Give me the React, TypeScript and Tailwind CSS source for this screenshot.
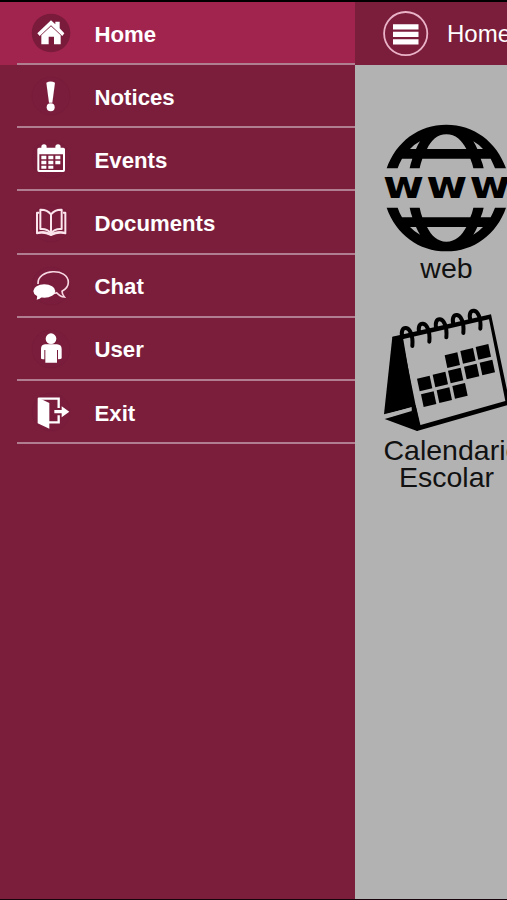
import type { ReactNode } from "react";

const sans = "font-['Liberation_Sans',Arial,sans-serif]";

function RowIcon({ children, home = false }: { children: ReactNode; home?: boolean }) {
  return (
    <svg
      viewBox="0 0 120 120"
      className={`mt-px ml-[31px] h-[40px] w-[40px] shrink-0 ${home ? "text-[#771c3a]" : "text-[#741a39]"}`}
      fill="#fff"
    >
      {children}
    </svg>
  );
}

const disc = <circle cx="60" cy="60" r="57" fill="#7a1d3c" stroke="#731b39" strokeWidth="1.5" />;

const HomeIcon = (
  <RowIcon home>
    <circle cx="60" cy="60" r="58" fill="#7a1b3c" />
    <path d="M60 22 L73 34 V26 H86 V46 L100 61 L94 69 L60 37 L26 69 L19 61 Z" />
    <path d="M60 40 L89 67 V94 H69 V71 H53 V94 H31 V67 Z" />
  </RowIcon>
);

const NoticeIcon = (
  <RowIcon>
    {disc}
    <path d="M46 20 Q59 13 72 20 L64 80 H54 Z" />
    <circle cx="59" cy="94" r="12" />
  </RowIcon>
);

const EventsIcon = (
  <RowIcon>
    {disc}
    <path
      fillRule="evenodd"
      d="M24 26 H97 Q102 26 102 31 V94 Q102 99 97 99 H24 Q19 99 19 94 V31 Q19 26 24 26 Z M25 46 V93 H96 V46 Z"
    />
    <circle cx="39" cy="24" r="8" />
    <circle cx="81" cy="24" r="8" />
    <path d="M31 50h15v11H31zM52 50h15v11H52zM73 50h15v11H73zM31 65h15v11H31zM52 65h15v11H52zM73 65h15v11H73zM31 80h15v9H31zM52 80h15v9H52z" />
  </RowIcon>
);

const DocumentsIcon = (
  <RowIcon>
    {disc}
    <g fill="none" stroke="#fbe4ec" strokeWidth="6" strokeLinejoin="round">
      <path d="M60 34 Q48 19 28 20 V78 Q49 76 60 91 Q71 76 92 78 V20 Q72 19 60 34 Z" />
      <path d="M60 34 V90" />
      <path d="M25 29 H18 V91 Q42 83 60 95 Q78 83 103 91 V29 H96" />
    </g>
    <path fill="#fbe4ec" d="M19 86 Q44 82 60 91 Q76 82 102 86 V93 Q82 88 60 99 Q38 88 19 93 Z" />
  </RowIcon>
);

const ChatIcon = (
  <RowIcon>
    {disc}
    <path
      fill="none"
      stroke="#f7d7e2"
      strokeWidth="5"
      d="M21 54 C18 8 112 4 112 49 C112 61 104 70 93 76 C93 83 96 88 100 93 C90 92 82 86 77 80 Q72 82 66 82"
    />
    <ellipse cx="40" cy="75" rx="33" ry="20" />
    <path d="M18 88 Q20 95 17 101 Q27 99 33 92 Z" />
  </RowIcon>
);

const UserIcon = (
  <RowIcon>
    {disc}
    <circle cx="60" cy="29" r="16" />
    <path d="M42 46 H78 Q92 47 92 60 V88 Q91 91 81 91 V63 H78 V101 H43 V63 H40 V91 Q30 91 30 88 V60 Q30 47 42 46 Z" />
  </RowIcon>
);

const ExitIcon = (
  <RowIcon>
    {disc}
    <path d="M22 17 L55 33 V110 L20 94 V19 Z" />
    <path d="M22 20 H83 V48 M83 70 V91 H54" fill="none" stroke="#fff" strokeWidth="7" />
    <path d="M70 54 H92 V43 L115 59 L92 76 V64 H70 Z" />
  </RowIcon>
);

const items = [
  { label: "Home", icon: HomeIcon },
  { label: "Notices", icon: NoticeIcon },
  { label: "Events", icon: EventsIcon },
  { label: "Documents", icon: DocumentsIcon },
  { label: "Chat", icon: ChatIcon },
  { label: "User", icon: UserIcon },
  { label: "Exit", icon: ExitIcon },
];

function Globe() {
  const half = (
    <path
      fillRule="evenodd"
      d="M51 160 C79 80 147 29 230 29 C313 29 381 80 409 160 H376 Q370 145 363 131 H333 Q339 145 342 160 H311 Q308 145 302 131 H158 Q153 145 150 160 H120 Q123 145 128 131 H97 Q89 145 84 160 Z M172 102 H290 C276 76 258 58 230 58 C203 58 185 76 172 102 Z M121 102 H139 Q144 90 151 79 Q134 88 121 102 Z M323 102 H340 Q327 88 311 79 Q318 90 323 102 Z"
    />
  );
  return (
    <svg viewBox="43 27 378 384" className="block h-[128px] w-[126px]" fill="#000">
      {half}
      <g transform="translate(0 438) scale(1 -1)">{half}</g>
      <text
        x="0"
        y="0"
        transform="translate(40 249) scale(1.19 1)"
        fontSize="112"
        fontWeight="700"
        letterSpacing="5.5"
        fontFamily="'DejaVu Sans', sans-serif"
      >
        www
      </text>
    </svg>
  );
}

const squares = [
  [222, 180], [269, 167], [315, 155],
  [139, 250], [186, 238], [232, 226], [280, 214], [327, 202],
  [151, 297], [198, 285], [245, 272],
];

function CalendarArt() {
  return (
    <svg viewBox="40 38 378 372" className="block h-[124px] w-[126px]" fill="#000">
      <path d="M65 125 L96 121 L132 334 L40 357 Z" />
      <path d="M42 371 L123 347 L148 393 L139 407 Z" />
      <path d="M123 334 L135 330 L150 392 L139 407 Z" />
      <path fillRule="evenodd" d="M65 124 L361 57 L418 327 L139 407 Z M95 132 L147 390 L404 317 L355 72 Z" />
      <path d="M42 358 L123 335 V344 L58 365 Z" fill="#b2b2b2" />
      {squares.map(([x, y]) => (
        <path key={`${x}-${y}`} d={`M${x} ${y} l38 -9 l8 38 l-38 9 z`} />
      ))}
      {[0, 1, 2, 3, 4].map((i) => (
        <path
          key={i}
          d="M95 126 C90 106 97 97 106 98 C117 99 128 119 125 152"
          transform={`translate(${i * 51} ${i * -13})`}
          fill="none"
          stroke="#000"
          strokeWidth="12"
          strokeLinecap="round"
        />
      ))}
    </svg>
  );
}

export default function App() {
  return (
    <div className={`flex h-[900px] w-[507px] flex-col overflow-hidden border-b border-t-2 border-b-[#16030c] border-t-black bg-[#7b1e3c] ${sans}`}>
      <div className="flex min-h-0 flex-1">
        <nav className="w-[355px] shrink-0 bg-[#7b1e3c]">
          {items.map((item, i) => (
            <div key={item.label} className={`h-[63.2px] ${i === 0 ? "bg-[#a0244e]" : ""}`}>
              <div className="flex h-[61px] items-center">
                {item.icon}
                <span className="ml-[23.5px] pt-[4px] text-[22.2px] leading-[26px] font-bold text-white">{item.label}</span>
              </div>
              <div className="ml-[17px] h-[2px] bg-[#b17d91]" />
            </div>
          ))}
        </nav>
        <main className="w-[152px] shrink-0 overflow-hidden bg-[#b2b2b2]">
          <header className="flex h-[63px] items-center bg-[#7b1e3c]">
            <svg viewBox="0 0 46 46" className="ml-[28px] h-[46px] w-[46px] shrink-0">
              <circle cx="22.7" cy="22.6" r="21.6" fill="none" stroke="#eab3c8" strokeWidth="1.8" />
              <path d="M10 13.2h25.5v5.3H10zM10 20.7h25.5v5.3H10zM10 28.3h25.5v5.3H10z" fill="#fff" />
            </svg>
            <span className="ml-[18px] pt-px text-[24px] leading-[28px] text-white">Home</span>
          </header>
          <section className="ml-[28.5px] w-[126px] pt-[59px] text-center text-[28.5px] leading-[27px] whitespace-nowrap text-[#111]">
            <Globe />
            <p className="mt-[3px]">web</p>
            <div className="mt-[26px]">
              <CalendarArt />
            </div>
            <p className="mt-[5px]">
              Calendario
              <br />
              Escolar
            </p>
          </section>
        </main>
      </div>
    </div>
  );
}
